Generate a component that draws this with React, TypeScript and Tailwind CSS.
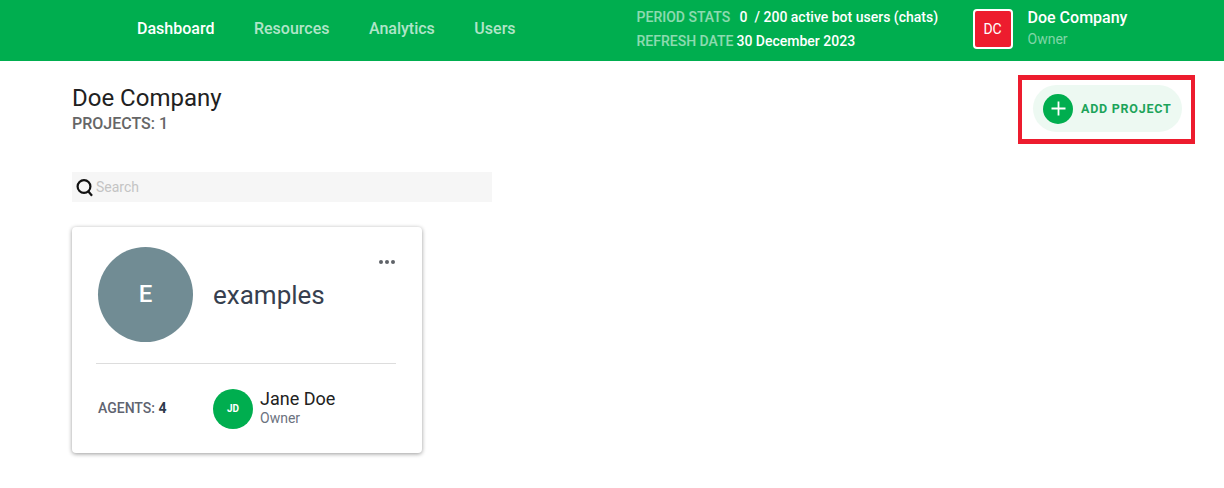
import React from "react";

export default function App() {
  return (
    <div className="w-[1224px] h-[488px] bg-white overflow-hidden font-['Roboto',sans-serif]">
      <header className="h-[61px] bg-[#00ae4f] flex items-center">
        <nav className="ml-[137px] flex gap-[39.5px] text-[16px] leading-[20px] font-medium text-white/70 mb-[3px]">
          <span className="text-white">Dashboard</span>
          <span>Resources</span>
          <span>Analytics</span>
          <span>Users</span>
        </nav>
        <div className="ml-[121px] w-[336px] flex flex-col gap-[8px] text-[14px] leading-[16px] font-medium text-white/55 mb-[3px]">
          <div className="flex whitespace-pre">PERIOD STATS<span className="text-white ml-[9.5px]">0  / 200 active bot users (chats)</span></div>
          <div className="flex whitespace-pre">REFRESH DATE<span className="text-white ml-[3px]">30 December 2023</span></div>
        </div>
        <div className="w-[40px] h-[40px] mb-[3px] rounded-[4px] border-2 border-white bg-[#ed1c2e] text-white text-[14px] flex items-center justify-center">DC</div>
        <div className="ml-[15px] flex flex-col mb-[6px]">
          <span className="text-white text-[16px] leading-[20px] font-medium">Doe Company</span>
          <span className="text-white/50 text-[14px] leading-[18px] mt-[2px]">Owner</span>
        </div>
      </header>
      <main className="relative px-[72px]">
        <div className="pt-[22px]">
          <h1 className="text-[24px] leading-[30px] text-[#212121]">Doe Company</h1>
          <p className="text-[16px] leading-[20px] font-medium text-[#666666] mt-[1px]">PROJECTS: 1</p>
        </div>
        <div className="absolute left-[1018px] top-[14px] w-[177px] h-[69px] border-x-[4px] border-y-[5px] border-[#ed1c2e] flex items-center justify-center">
          <button className="w-[149px] h-[47px] ml-[2px] mb-[2px] rounded-full bg-[#edf9f2] flex items-center pl-[10px]">
            <span className="w-[30px] h-[30px] rounded-full bg-[#00ae4f] flex items-center justify-center">
              <svg width="15" height="15" viewBox="0 0 15 15" fill="none" stroke="white" strokeWidth="1.8"><path d="M7.5 0.5v14M0.5 7.5h14" /></svg>
            </span>
            <span className="ml-[8px] pt-[1px] text-[12.5px] font-bold tracking-[0.75px] text-[#1ca45a] whitespace-nowrap">ADD PROJECT</span>
          </button>
        </div>
        <div className="mt-[38px] w-[420px] h-[30px] bg-[#f6f6f6] flex items-center pl-[4px]">
          <svg width="17" height="19" viewBox="0 0 17 19" fill="none" stroke="#111" strokeWidth="2.2"><circle cx="8" cy="8.5" r="6.4" /><path d="M12.2 13.2l3.8 4.6" /></svg>
          <span className="ml-[3px] text-[14px] text-[#c4c4c4]">Search</span>
        </div>
        <section className="mt-[25px] w-[350px] h-[226px] bg-white rounded-[4px] shadow-[0_1px_4px_rgba(0,0,0,0.4)] relative">
          <div className="mx-[24px] w-[300px] h-[137px] flex items-center border-b border-[#dddddd] px-[2px] pb-[1px]">
            <div className="w-[95px] h-[95px] rounded-full bg-[#718c94] flex items-center justify-center text-white text-[24px] font-medium pb-[2px]">E</div>
            <span className="ml-[20px] text-[26px] text-[#373f4f] mt-[2px]">examples</span>
          </div>
          <div className="absolute right-[27px] top-[33px] flex gap-[2px]">
            <span className="w-[4px] h-[4px] rounded-full bg-[#5f6368]" />
            <span className="w-[4px] h-[4px] rounded-full bg-[#5f6368]" />
            <span className="w-[4px] h-[4px] rounded-full bg-[#5f6368]" />
          </div>
          <div className="flex items-center h-[89px] px-[26px]">
            <span className="w-[115px] text-[14px] font-medium text-[#5f6470]">AGENTS: <b className="text-[#2f3a4c]">4</b></span>
            <div className="w-[40px] h-[40px] rounded-full bg-[#00ae4f] text-white text-[10px] font-bold flex items-center justify-center">JD</div>
            <div className="ml-[7px] flex flex-col mb-[2px]">
              <span className="text-[18px] leading-[20px] text-[#212121]">Jane Doe</span>
              <span className="text-[14px] leading-[18px] text-[#6b7280]">Owner</span>
            </div>
          </div>
        </section>
      </main>
    </div>
  );
}
